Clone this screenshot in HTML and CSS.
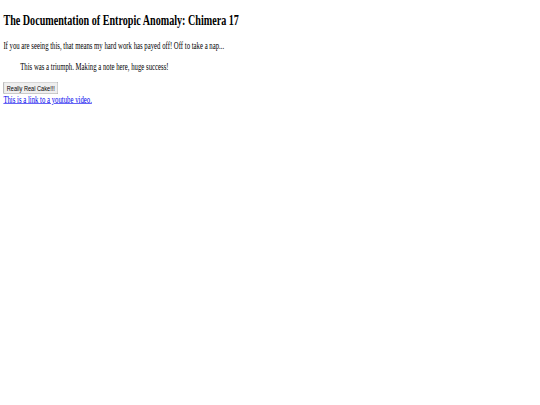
FILE: index.html
```html
<!DOCTYPE html>
<html>
<head>
<meta charset="utf-8">
<title>Chimera 17</title>
<link rel="stylesheet" href="styles.css">
</head>
<body>
<div class="page">
  <h2 class="title">The Documentation of Entropic Anomaly: Chimera 17</h2>
  <p class="intro">If you are seeing this, that means my hard work has payed off! Off to take a nap...</p>
  <blockquote class="note">This was a triumph. Making a note here, huge success!</blockquote>
  <button class="cake">Really Real Cake!!!</button><br>
  <a class="video" href="#">This is a link to a youtube video.</a>
</div>
</body>
</html>
```
FILE: styles.css
```css
html, body {
  margin: 0;
  padding: 0;
  background: #ffffff;
  overflow: hidden;
  width: 540px;
  height: 405px;
}
.page {
  display: flow-root;
  width: 1280px;
  padding: 0 8px;
  box-sizing: border-box;
  font-family: "Liberation Serif", serif;
  font-size: 16px;
  transform: scale(0.421875, 0.6);
  transform-origin: 0 0;
  color: #000;
}
.title {
  font-size: 24px;
  font-weight: bold;
  margin: 19.92px 0 21px;
}
.intro {
  margin: 16px 0;
}
.note {
  margin: 16px 40px;
}
.cake {
  font-family: "Liberation Sans", Arial, sans-serif;
  font-size: 13.33px;
  color: #000;
}
.video {
  color: #0000ee;
  text-decoration: underline;
}
```
